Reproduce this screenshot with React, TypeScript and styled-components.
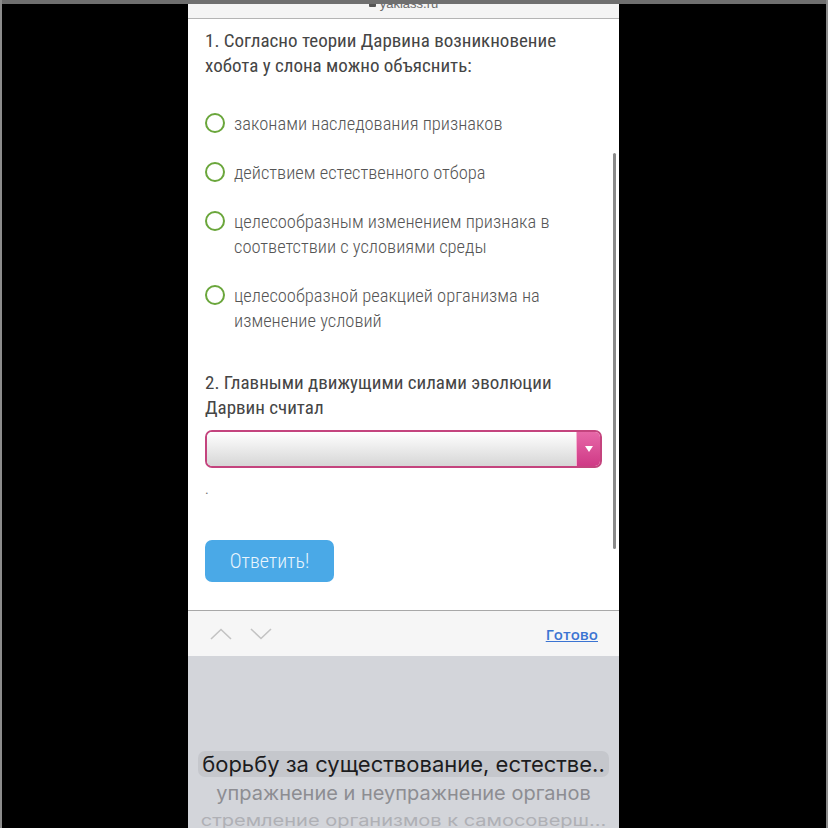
import React from 'react';
import styled, { createGlobalStyle } from 'styled-components';

interface Option {
  id: number;
  text: string;
}

const options: Option[] = [
  { id: 1, text: 'законами наследования признаков' },
  { id: 2, text: 'действием естественного отбора' },
  { id: 3, text: 'целесообразным изменением признака в соответствии с условиями среды' },
  { id: 4, text: 'целесообразной реакцией организма на изменение условий' },
];

const wheel: string[] = [
  'борьбу за существование, естестве..',
  'упражнение и неупражнение органов',
  'стремление организмов к самосоверш...',
];

const App: React.FunctionComponent = (): React.ReactElement => (
  <>
    <GlobalStyle />
    <Frame>
      <TopBand />
      <Row>
        <Side />
        <Phone>
          <AddressBar>
            <Lock /> yaklass.ru
          </AddressBar>
          <Content>
            <Question>
              1. Согласно теории Дарвина возникновение хобота у слона можно объяснить:
            </Question>
            <OptionList>
              {options.map((option: Option) => (
                <OptionRow key={option.id}>
                  <Radio />
                  <OptionText>{option.text}</OptionText>
                </OptionRow>
              ))}
            </OptionList>
            <Question $top={36}>2. Главными движущими силами эволюции Дарвин считал</Question>
            <Select>
              <SelectField />
              <SelectArrow>
                <Triangle />
              </SelectArrow>
            </Select>
            <Dot>.</Dot>
            <AnswerButton>Ответить!</AnswerButton>
            <Scrollbar />
          </Content>
          <Toolbar>
            <Arrows>
              <Chevron viewBox="0 0 22 12">
                <polyline points="1,11 11,1.5 21,11" />
              </Chevron>
              <Chevron viewBox="0 0 22 12">
                <polyline points="1,1 11,10.5 21,1" />
              </Chevron>
            </Arrows>
            <Done>Готово</Done>
          </Toolbar>
          <Picker>
            <Selected>{wheel[0]}</Selected>
            <WheelItem $level={1}>{wheel[1]}</WheelItem>
            <WheelItem $level={2}>{wheel[2]}</WheelItem>
          </Picker>
        </Phone>
        <Side />
      </Row>
    </Frame>
  </>
);

export default App;

// Styled components

const GlobalStyle = createGlobalStyle`
  html, body {
    margin: 0;
    padding: 0;
    background: #000;
    overflow: hidden;
  }
`;

const condensed = `"Roboto Condensed", "Liberation Sans Narrow", "DejaVu Sans Condensed", Roboto, sans-serif`;

const Frame = styled('div')`
  width: 828px;
  height: 828px;
  box-sizing: border-box;
  display: grid;
  grid-template-rows: 4px 1fr;
  background: #000;
  border-left: 2px solid #8c8c8c;
  border-right: 2px solid #8c8c8c;
`;

const TopBand = styled('div')`
  background: #6f6f6f;
`;

const Row = styled('div')`
  display: grid;
  grid-template-columns: 186px 431px 1fr;
  overflow: hidden;
`;

const Side = styled('div')`
  background: #000;
`;

const Phone = styled('div')`
  display: flex;
  flex-direction: column;
  background: #fff;
  overflow: hidden;
`;

// the page scrolled so only the bottom of the url shows under the top band
const AddressBar = styled('div')`
  height: 14px;
  background: #f4f4f4;
  border-bottom: 1px solid #b4b4b4;
  display: flex;
  justify-content: center;
  align-items: flex-start;
  gap: 4px;
  overflow: hidden;
  font-family: "Liberation Sans", sans-serif;
  font-size: 13px;
  line-height: 0;
  color: #6a6a6a;
`;

const Lock = styled('span')`
  display: inline-block;
  width: 7px;
  height: 8px;
  background: #555;
  border-radius: 1px;
  margin-top: -5px;
`;

const Content = styled('div')`
  position: relative;
  height: 591px;
  box-sizing: border-box;
  padding: 9px 17px 0 17px;
  display: flex;
  flex-direction: column;
  font-family: ${condensed};
  font-stretch: condensed;
`;

const Question = styled('div')<{ $top?: number }>`
  margin-top: ${(p) => p.$top ?? 0}px;
  font-size: 19px;
  line-height: 25px;
  font-weight: 400;
  color: #454545;
`;

const OptionList = styled('div')`
  margin-top: 34px;
  display: flex;
  flex-direction: column;
  gap: 24px;
`;

const OptionRow = styled('div')`
  display: flex;
  align-items: flex-start;
  gap: 9px;
`;

const Radio = styled('span')`
  flex: none;
  width: 20px;
  height: 20px;
  box-sizing: border-box;
  margin-top: 1px;
  border: 2px solid #6aa63b;
  border-radius: 50%;
`;

const OptionText = styled('div')`
  font-size: 18.5px;
  line-height: 25px;
  font-weight: 300;
  color: #555;
  max-width: 350px;
`;

const Select = styled('div')`
  margin-top: 10px;
  height: 38px;
  box-sizing: border-box;
  display: flex;
  border: 2px solid #c4447e;
  border-radius: 7px;
  overflow: hidden;
`;

const SelectField = styled('div')`
  flex: 1;
  background: linear-gradient(#ffffff, #d6d6d6);
`;

const SelectArrow = styled('div')`
  width: 23px;
  display: flex;
  align-items: center;
  justify-content: center;
  border-left: 1px solid #f3b5d1;
  background: linear-gradient(#e768a8, #cf3a86);
`;

const Triangle = styled('span')`
  width: 0;
  height: 0;
  border-left: 4px solid transparent;
  border-right: 4px solid transparent;
  border-top: 6px solid #fff;
`;

const Dot = styled('div')`
  margin-top: 13px;
  height: 20px;
  font-size: 14px;
  color: #777;
`;

const AnswerButton = styled('button')`
  margin-top: 39px;
  width: 129px;
  height: 42px;
  border: none;
  border-radius: 7px;
  background: #4aa9e7;
  color: #e9f5fd;
  font-family: ${condensed};
  font-stretch: condensed;
  font-size: 20px;
  font-weight: 300;
  padding: 0;
`;

const Scrollbar = styled('div')`
  position: absolute;
  right: 3px;
  top: 134px;
  width: 3px;
  height: 396px;
  border-radius: 2px;
  background: #8a8a8a;
`;

const Toolbar = styled('div')`
  height: 45px;
  background: #f6f6f6;
  border-top: 1px solid #a8a8a8;
  display: flex;
  align-items: center;
  justify-content: space-between;
  padding: 0 21px 0 22px;
`;

const Arrows = styled('div')`
  display: flex;
  gap: 18px;
`;

const Chevron = styled('svg')`
  width: 22px;
  height: 12px;
  fill: none;
  stroke: #c3c3c3;
  stroke-width: 1.6;
`;

const Done = styled('span')`
  font-family: "Open Sans", "Liberation Sans", sans-serif;
  font-size: 15px;
  font-weight: 600;
  color: #3b74d2;
  text-decoration: underline;
`;

const Picker = styled('div')`
  flex: 1;
  background: #d3d5da;
  display: flex;
  flex-direction: column;
  align-items: center;
  padding-top: 95px;
  font-family: Inter, "Liberation Sans", sans-serif;
  overflow: hidden;
`;

const Selected = styled('div')`
  width: 411px;
  height: 33px;
  box-sizing: border-box;
  border-radius: 7px;
  background: #c5c7cc;
  display: flex;
  align-items: center;
  justify-content: center;
  white-space: nowrap;
  font-size: 22px;
  color: #1c1c1e;
`;

const WheelItem = styled('div')<{ $level: number }>`
  margin-top: ${(p) => (p.$level === 1 ? 3 : 0)}px;
  height: 27px;
  line-height: 27px;
  white-space: nowrap;
  font-size: 20px;
  color: ${(p) => (p.$level === 1 ? '#8d8d92' : '#afb0b5')};
  transform: scaleY(${(p) => (p.$level === 1 ? 0.96 : 0.8)});
`;
